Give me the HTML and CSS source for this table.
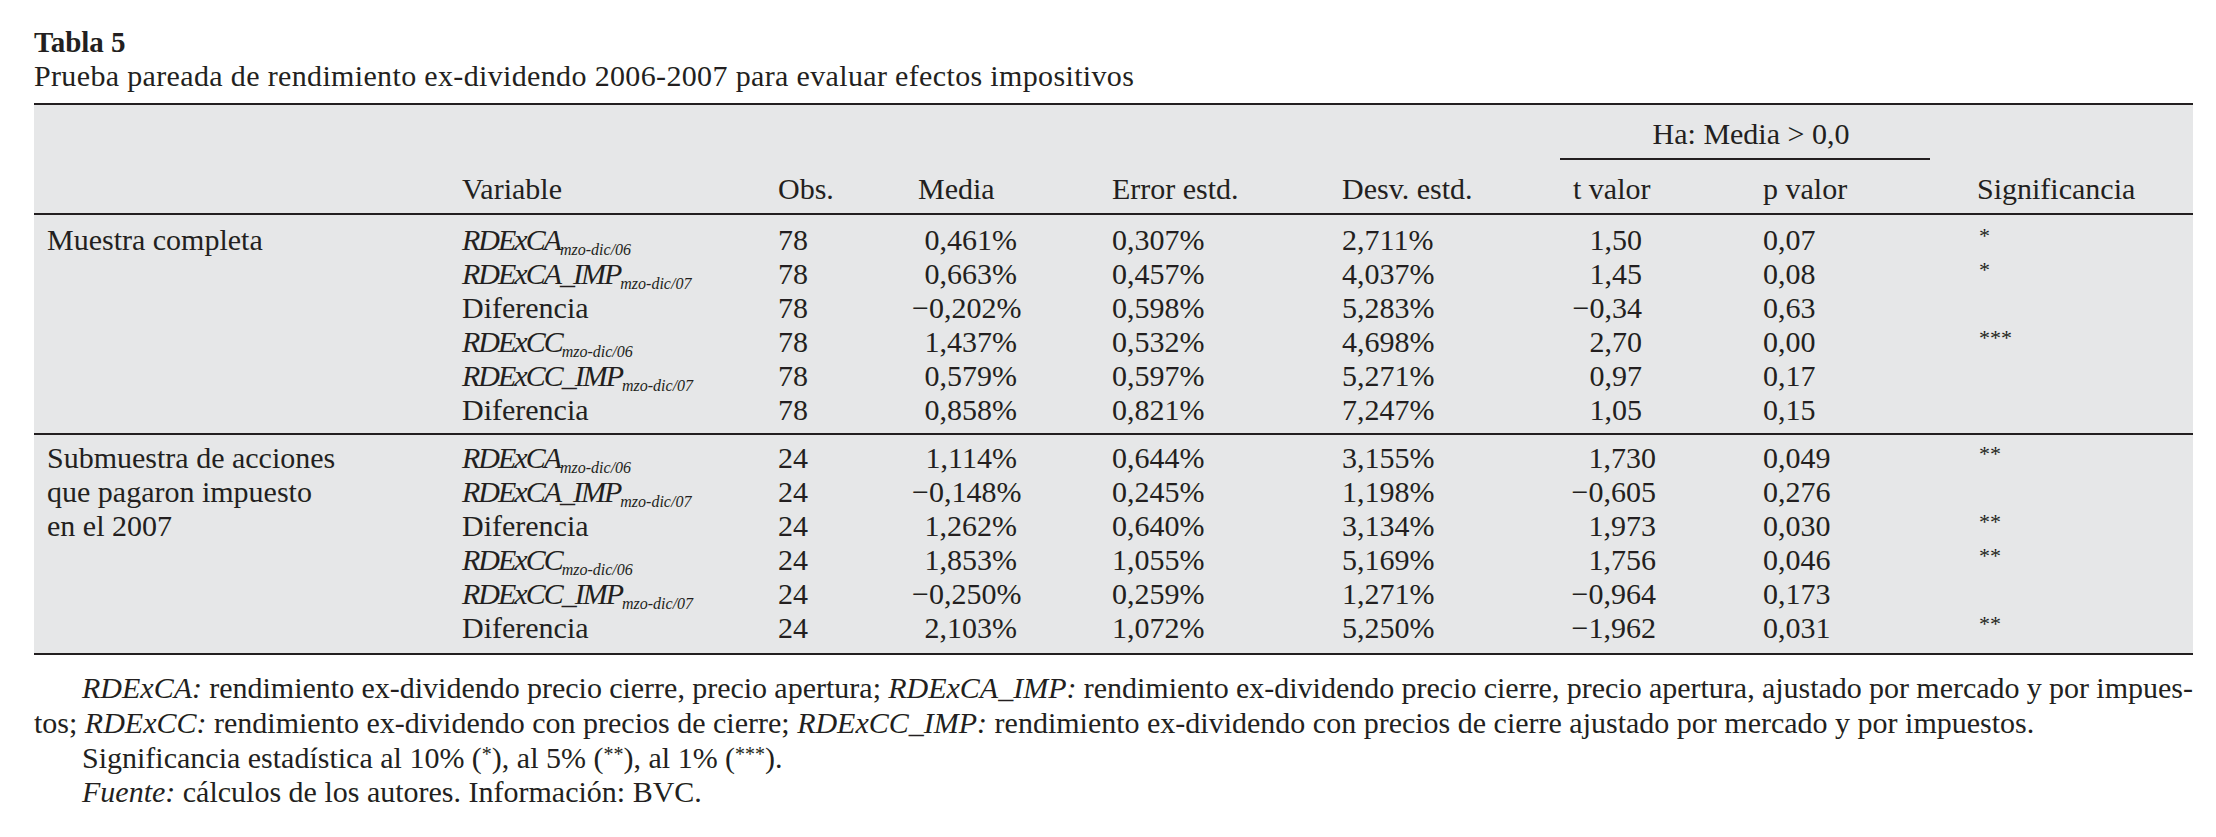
FILE: index.html
```html
<!DOCTYPE html>
<html lang="es">
<head>
<meta charset="utf-8">
<title>Tabla 5</title>
<link rel="stylesheet" href="styles.css">
</head>
<body>
<div class="page">
  <div class="caption">
    <div class="label">Tabla 5</div>
    <div class="title">Prueba pareada de rendimiento ex-dividendo 2006-2007 para evaluar efectos impositivos</div>
  </div>
  <div class="table">
    <div class="grid thead">
      <div class="ha">Ha: Media &gt; 0,0</div>
      <div class="hc"></div>
      <div class="hc">Variable</div>
      <div class="hc">Obs.</div>
      <div class="hc hm">Media</div>
      <div class="hc">Error estd.</div>
      <div class="hc">Desv. estd.</div>
      <div class="hc ht">t valor</div>
      <div class="hc">p valor</div>
      <div class="hc hs">Significancia</div>
    </div>

    <div class="grid group g1">
      <div class="lab">Muestra completa</div>
      <div><i class="vn">RDExCA</i><sub>mzo-dic/06</sub></div><div>78</div><div class="m">0,461%</div><div>0,307%</div><div>2,711%</div><div class="t t2">1,50</div><div>0,07</div><div class="s"><span class="ast">*</span></div>
      <div><i class="vn">RDExCA_IMP</i><sub>mzo-dic/07</sub></div><div>78</div><div class="m">0,663%</div><div>0,457%</div><div>4,037%</div><div class="t t2">1,45</div><div>0,08</div><div class="s"><span class="ast">*</span></div>
      <div>Diferencia</div><div>78</div><div class="m">−0,202%</div><div>0,598%</div><div>5,283%</div><div class="t t2">−0,34</div><div>0,63</div><div class="s"></div>
      <div><i class="vn">RDExCC</i><sub>mzo-dic/06</sub></div><div>78</div><div class="m">1,437%</div><div>0,532%</div><div>4,698%</div><div class="t t2">2,70</div><div>0,00</div><div class="s"><span class="ast">***</span></div>
      <div><i class="vn">RDExCC_IMP</i><sub>mzo-dic/07</sub></div><div>78</div><div class="m">0,579%</div><div>0,597%</div><div>5,271%</div><div class="t t2">0,97</div><div>0,17</div><div class="s"></div>
      <div>Diferencia</div><div>78</div><div class="m">0,858%</div><div>0,821%</div><div>7,247%</div><div class="t t2">1,05</div><div>0,15</div><div class="s"></div>
    </div>

    <div class="grid group g2">
      <div class="lab">Submuestra de acciones que pagaron impuesto en el 2007</div>
      <div><i class="vn">RDExCA</i><sub>mzo-dic/06</sub></div><div>24</div><div class="m">1,114%</div><div>0,644%</div><div>3,155%</div><div class="t">1,730</div><div>0,049</div><div class="s"><span class="ast">**</span></div>
      <div><i class="vn">RDExCA_IMP</i><sub>mzo-dic/07</sub></div><div>24</div><div class="m">−0,148%</div><div>0,245%</div><div>1,198%</div><div class="t">−0,605</div><div>0,276</div><div class="s"></div>
      <div>Diferencia</div><div>24</div><div class="m">1,262%</div><div>0,640%</div><div>3,134%</div><div class="t">1,973</div><div>0,030</div><div class="s"><span class="ast">**</span></div>
      <div><i class="vn">RDExCC</i><sub>mzo-dic/06</sub></div><div>24</div><div class="m">1,853%</div><div>1,055%</div><div>5,169%</div><div class="t">1,756</div><div>0,046</div><div class="s"><span class="ast">**</span></div>
      <div><i class="vn">RDExCC_IMP</i><sub>mzo-dic/07</sub></div><div>24</div><div class="m">−0,250%</div><div>0,259%</div><div>1,271%</div><div class="t">−0,964</div><div>0,173</div><div class="s"></div>
      <div>Diferencia</div><div>24</div><div class="m">2,103%</div><div>1,072%</div><div>5,250%</div><div class="t">−1,962</div><div>0,031</div><div class="s"><span class="ast">**</span></div>
    </div>
  </div>

  <div class="notes">
    <div class="n1"><i>RDExCA:</i> rendimiento ex-dividendo precio cierre, precio apertura; <i>RDExCA_IMP:</i> rendimiento ex-dividendo precio cierre, precio apertura, ajustado por mercado y por impues-</div>
    <div class="n2">tos; <i>RDExCC:</i> rendimiento ex-dividendo con precios de cierre; <i>RDExCC_IMP:</i> rendimiento ex-dividendo con precios de cierre ajustado por mercado y por impuestos.</div>
    <div class="n3">Significancia estadística al 10% (<span class="sup">*</span>), al 5% (<span class="sup">**</span>), al 1% (<span class="sup">***</span>).</div>
    <div class="n3"><i>Fuente:</i> cálculos de los autores. Información: BVC.</div>
  </div>
</div>
</body>
</html>
```

FILE: styles.css
```css
html, body {
  margin: 0;
  padding: 0;
  background: #ffffff;
}

body {
  color: #231f20;
  font-family: "Liberation Serif", "Times New Roman", serif;
  font-size: 30px;
}

.page {
  width: 2159px;
  padding: 25px 23px 0 34px;
}

.label {
  font-weight: bold;
  font-size: 29px;
  line-height: 34px;
}

.title {
  line-height: 34px;
  letter-spacing: 0.35px;
}

.table {
  margin-top: 10px;
  border-top: 2px solid #231f20;
  border-bottom: 2px solid #231f20;
  background: #e6e7e8;
}

.grid {
  display: grid;
  grid-template-columns: 428px 316px 134px 200px 230px 218px 203px 167px 263px;
}

.grid > div {
  line-height: 34px;
  white-space: nowrap;
}

.thead {
  border-bottom: 2px solid #231f20;
}

.ha {
  grid-column: 7 / 9;
  grid-row: 1;
  text-align: center;
  padding: 12px 0 7px 12px;
  border-bottom: 2px solid #231f20;
}

.hc {
  grid-row: 2;
  padding: 12px 0 7px 0;
}

.hm { padding-left: 6px; }
.ht { padding-left: 13px; }
.hs { padding-left: 47px; }

.g1 { padding: 8px 0 6px 0; }
.g2 {
  padding: 6px 0 8px 0;
  border-top: 2px solid #231f20;
}

.grid > .lab {
  grid-column: 1;
  grid-row: 1 / span 6;
  padding: 0 115px 0 13px;
  white-space: normal;
}

.vn {
  letter-spacing: -2px;
}

sub {
  font-size: 16px;
  font-style: italic;
  vertical-align: -5px;
  line-height: 0;
}

.grid > .m {
  text-align: right;
  padding-right: 95px;
}

.grid > .t {
  text-align: right;
  padding-right: 107px;
}

.grid > .t.t2 {
  padding-right: 121px;
}

.grid > .s {
  padding-left: 49px;
}

.ast {
  font-size: 22px;
  vertical-align: 7px;
  line-height: 0;
}

.notes {
  margin-top: 16px;
}

.notes > div {
  line-height: 34.8px;
}

.n1 {
  text-indent: 48px;
  word-spacing: -4px;
  text-align: justify;
  text-align-last: justify;
}

.n3 {
  text-indent: 48px;
}

.sup {
  font-size: 20px;
  vertical-align: 7px;
  line-height: 0;
}
```
